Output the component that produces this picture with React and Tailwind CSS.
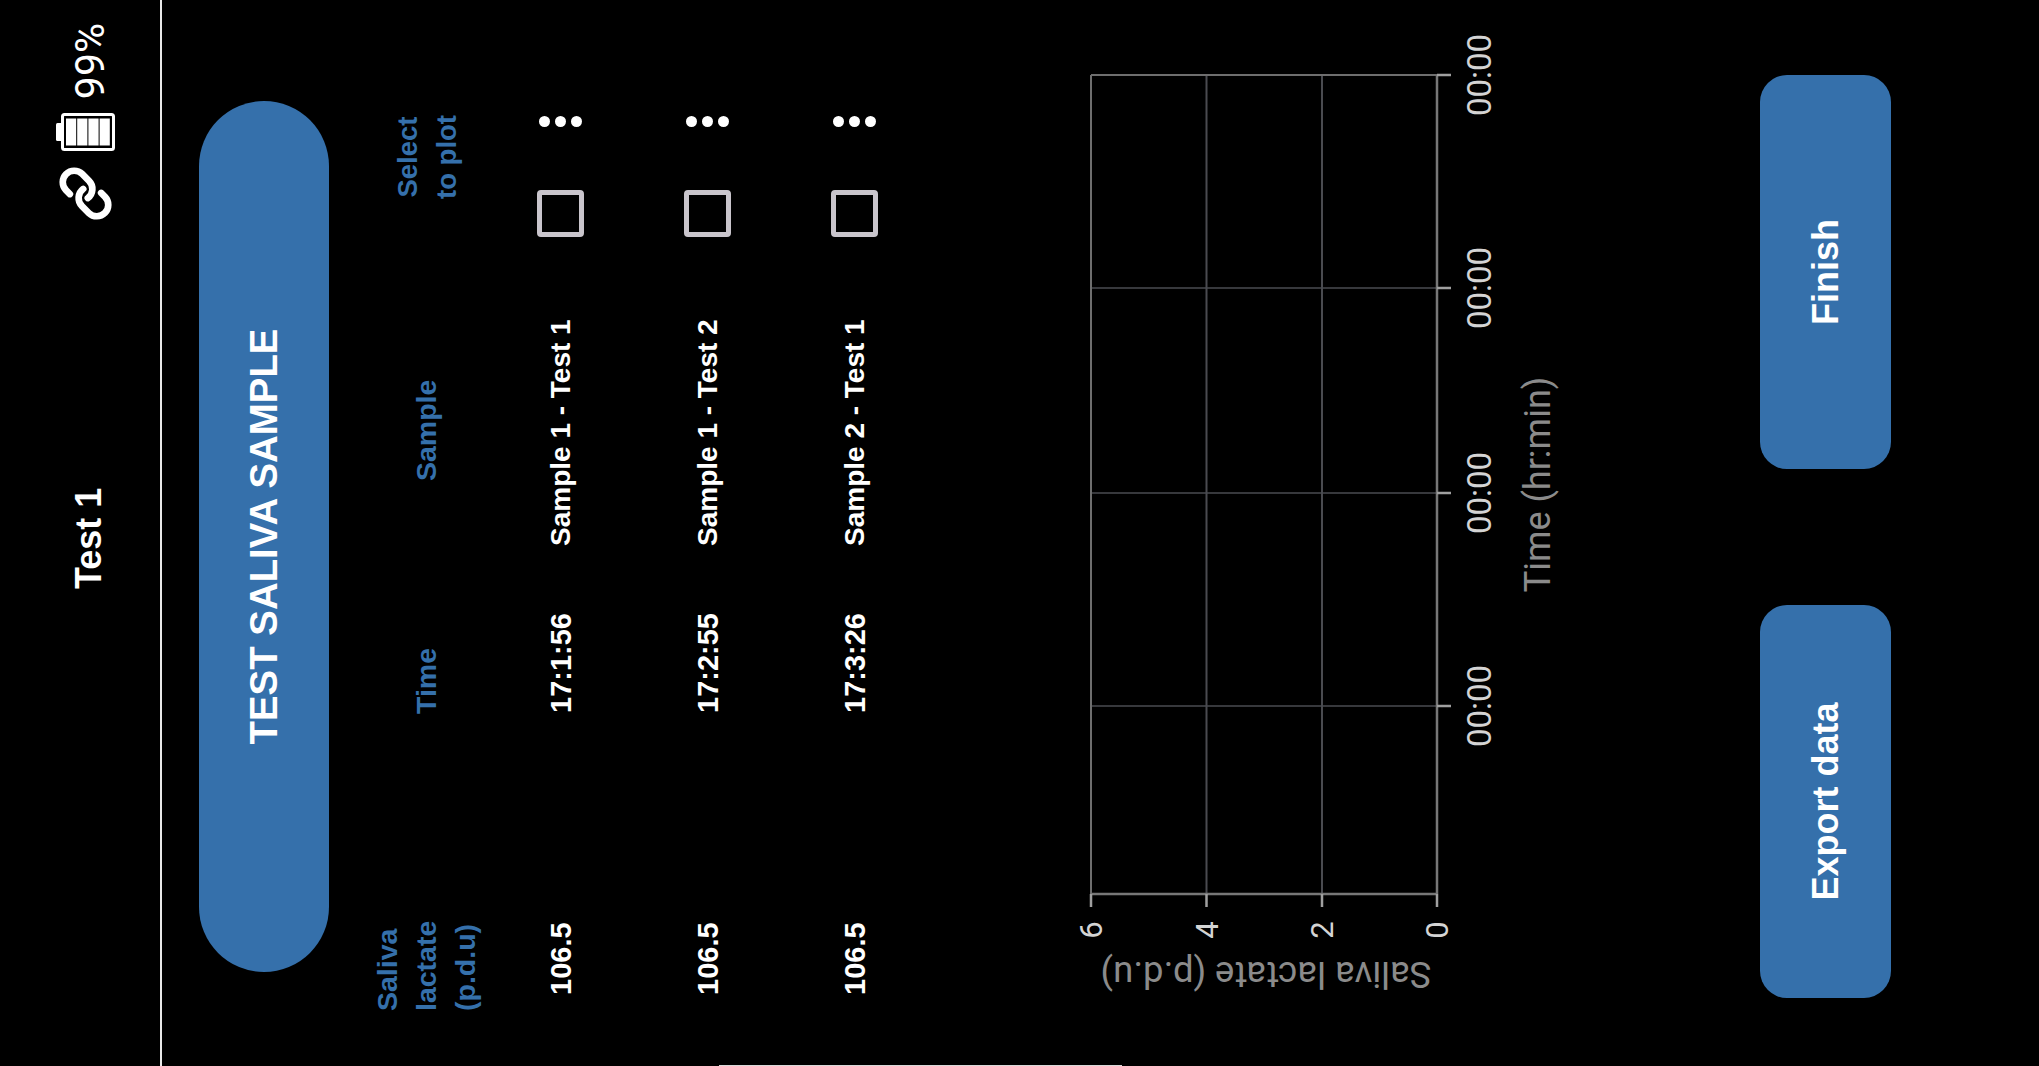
import { Link } from "lucide-react";

const rows = [
  { lactate: "106.5", time: "17:1:56", sample: "Sample 1 - Test 1" },
  { lactate: "106.5", time: "17:2:55", sample: "Sample 1 - Test 2" },
  { lactate: "106.5", time: "17:3:26", sample: "Sample 2 - Test 1" },
];

const tableCols = "grid grid-cols-[293px_169px_309px_110px_1fr] pl-[58px]";

function BatteryIcon() {
  return (
    <svg width="38" height="59" viewBox="0 0 38 59">
      <rect x="10" y="0" width="18" height="7" rx="1.5" fill="#fff" />
      <rect x="1.5" y="6.5" width="35" height="51" rx="2" fill="#000" stroke="#fff" strokeWidth="3" />
      <rect x="5.5" y="10" width="27" height="10.2" fill="#fff" />
      <rect x="5.5" y="21.2" width="27" height="10.2" fill="#fff" />
      <rect x="5.5" y="32.4" width="27" height="10.2" fill="#fff" />
      <rect x="5.5" y="43.6" width="27" height="10.2" fill="#fff" />
    </svg>
  );
}

function Chart() {
  const xTicks = [360, 573, 778, 991];
  const hLines = [31, 146.5, 262, 377];
  const yLabels = ["6", "4", "2", "0"];
  return (
    <svg width="1066" height="520" viewBox="0 0 1066 520" className="block font-['Roboto',sans-serif]">
      {hLines.slice(1, 3).map((y) => (
        <line key={y} x1="172" x2="991" y1={y} y2={y} stroke="#4a4b50" strokeWidth="2" />
      ))}
      {xTicks.slice(0, 3).map((x) => (
        <line key={x} x1={x} x2={x} y1="31" y2="377" stroke="#4a4b50" strokeWidth="1.5" />
      ))}
      <line x1="172" x2="991" y1="31" y2="31" stroke="#6e6e6e" strokeWidth="2" />
      <line x1="991" x2="991" y1="31" y2="377" stroke="#6e6e6e" strokeWidth="2" />
      <line x1="172" x2="172" y1="31" y2="377" stroke="#777" strokeWidth="2.5" />
      <line x1="172" x2="991" y1="377" y2="377" stroke="#777" strokeWidth="2.5" />
      {hLines.map((y, i) => (
        <g key={y}>
          <line x1="159" x2="172" y1={y} y2={y} stroke="#a0a0a0" strokeWidth="2.5" />
          <text x="136" y={y + 11} textAnchor="middle" fontSize="31" fill="#d4d4d4">
            {yLabels[i]}
          </text>
        </g>
      ))}
      {xTicks.map((x) => (
        <g key={x}>
          <line x1={x} x2={x} y1="377" y2="391" stroke="#a0a0a0" strokeWidth="2.5" />
          <text x={x} y="431" textAnchor="middle" fontSize="33" fill="#d4d4d4">
            00:00
          </text>
        </g>
      ))}
      <text x="581.5" y="490" textAnchor="middle" fontSize="36" fill="#8b8b8b">
        Time (hr:min)
      </text>
      <text transform="translate(104,206) rotate(-90)" textAnchor="middle" fontSize="36.5" fill="#8b8b8b">
        Saliva lactate (p.d.u)
      </text>
    </svg>
  );
}

export default function App() {
  return (
    <div className="w-[2039px] h-[1066px] overflow-hidden bg-black">
      {/* the whole phone screen is turned on its side */}
      <div className="relative w-[1066px] h-[2039px] origin-top-left translate-y-[1066px] -rotate-90 bg-black text-white font-['Liberation_Sans',Arial,sans-serif]">
        <header className="flex items-center h-[162px] pt-[10px] pl-[477px] pr-[23px] border-b-2 border-[#e8e8e8]">
          <h1 className="mt-[7px] text-[36px] font-bold leading-none">Test 1</h1>
          <div className="ml-auto flex items-center">
            <Link size={55} strokeWidth={2.9} color="#fff" className="mr-[15px]" />
            <BatteryIcon />
            <span className="ml-[14px] mt-[11px] text-[41px] leading-none font-['Roboto',sans-serif]">99%</span>
          </div>
        </header>

        <div className="pt-[37px] pl-[94px] pr-[101px]">
          <button className="flex items-center justify-center w-full h-[130px] rounded-full bg-[#3570ab] text-[38.4px] font-bold">
            TEST SALIVA SAMPLE
          </button>
        </div>

        <div className={`${tableCols} items-center mt-[37px] h-[121px] text-[#3570ab] text-[28.5px] font-bold leading-[39px]`}>
          <div className="-ml-[3px]">
            Saliva
            <br />
            lactate
            <br />
            (p.d.u)
          </div>
          <div className="pl-px">Time</div>
          <div className="pl-[65px]">Sample</div>
          <div className="col-span-2 pl-[38px] text-center w-fit text-[27.5px]">
            Select
            <br />
            to plot
          </div>
        </div>

        {rows.map((row) => (
          <div key={row.sample} className={`${tableCols} items-center h-[147px] text-[29px] font-bold leading-9`}>
            <div className="pl-[13px]">{row.lactate}</div>
            <div className="pl-[2px]">{row.time}</div>
            <div className="text-[28px]">{row.sample}</div>
            <div className="w-[47px] h-[47px] rounded-[4px] border-[5px] border-[#c9c5cc]" />
            <div className="flex flex-col gap-[5px] w-[10px]">
              <span className="w-[11px] h-[11px] rounded-full bg-white" />
              <span className="w-[11px] h-[11px] rounded-full bg-white" />
              <span className="w-[11px] h-[11px] rounded-full bg-white" />
            </div>
          </div>
        ))}

        <div className="mt-[132px]">
          <Chart />
        </div>

        <div className="flex justify-between mt-[180px] pl-[68px] pr-[75px]">
          <button className="w-[393px] h-[131px] rounded-[27px] bg-[#3570ab] text-[36px] font-bold">Export data</button>
          <button className="w-[394px] h-[131px] rounded-[27px] bg-[#3570ab] text-[36px] font-bold">Finish</button>
        </div>

        {/* home indicator, clipped by the screen edge */}
        <div className="absolute left-0 top-[719px] w-px h-[403px] bg-[#d8d8d8]" />
      </div>
    </div>
  );
}
